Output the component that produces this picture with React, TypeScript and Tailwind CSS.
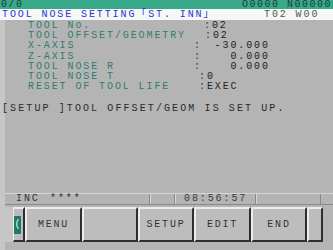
import React from "react";

const rows = [
  { label: "TOOL No.", colon: 176, value: "02" },
  { label: "TOOL OFFSET/GEOMETRY", colon: 177, value: "02" },
  { label: "X-AXIS", colon: 166, value: "-30.000", right: true },
  { label: "Z-AXIS", colon: 166, value: "0.000", right: true },
  { label: "TOOL NOSE R", colon: 166, value: "0.000", right: true },
  { label: "TOOL NOSE T", colon: 171, value: "0" },
  { label: "RESET OF TOOL LIFE", colon: 171, value: "EXEC" },
];

function SoftKey({ label, w }: { label?: string; w: string }) {
  return (
    <div
      className={`${w} h-full flex items-center justify-center bg-[#bdbdbd] border-t-2 border-l-2 border-t-[#ececec] border-l-[#ececec] border-b-2 border-r-2 border-b-[#2e2e2e] border-r-[#2e2e2e] text-[#333] tracking-[1.8px]`}
    >
      {label}
    </div>
  );
}

export default function App() {
  return (
    <div
      className="w-[333px] h-[250px] flex flex-col bg-[#c4c4c4] text-[10px] overflow-hidden"
      style={{ fontFamily: '"Liberation Mono", "Noto Sans CJK JP", monospace' }}
    >
      <div className="h-[9px] shrink-0 bg-[#3aa98a] flex items-center justify-between px-[1px] leading-[10px] text-[#163f33] tracking-[1.5px]">
        <span>0/0</span>
        <span>O0000 N00000</span>
      </div>
      <div className="h-[11px] shrink-0 bg-[#f6f8f6] flex items-center leading-[11px] tracking-[1.9px]">
        <span className="pl-[2px] text-[#2b2fd6] w-[264px]">TOOL NOSE SETTING「ST. INN」</span>
        <span className="text-[#555]">T02 W00</span>
      </div>
      <div className="h-[173px] shrink-0 flex bg-[#b4b4b4]">
        <div className="w-[5px] bg-[#c6c6c6]" />
        <div className="flex-1 flex flex-col pt-[1px] leading-[10.2px] tracking-[1.9px]">
          {rows.map((r, i) => (
            <div key={i} className="flex h-[10.2px]">
              <span className="pl-[23px] text-[#2f7d6e]" style={{ width: r.colon + 23 }}>
                {r.label}
              </span>
              <span className="text-[#3a3a3a]">:</span>
              {r.right ? (
                <span className="w-[68px] text-right text-[#222]">{r.value}</span>
              ) : (
                <span className="text-[#222]">{r.value}</span>
              )}
            </div>
          ))}
          <div className="h-[12px]" />
          <div className="flex h-[10.2px] -ml-[3px] text-[#2a2a2a] tracking-[2.1px]">[SETUP ]TOOL OFFSET/GEOM IS SET UP.</div>
        </div>
      </div>
      <div className="h-[12px] shrink-0 flex bg-[#b4b4b4] items-stretch">
        <div className="w-[5px] bg-[#c6c6c6]" />
        <div className="flex-1 flex border-t border-t-[#d6d6d6] border-b border-b-[#8a8a8a] text-[#333] leading-[10px]">
          <div className="w-[145px] flex items-center pl-[11px] border-r border-r-[#8a8a8a] tracking-[1.9px]">
            <span className="w-[34px]">INC</span>
            <span>****</span>
          </div>
          <div className="w-[25px] border-l border-l-[#d6d6d6] border-r border-r-[#8a8a8a]" />
          <div className="w-[81px] flex items-center pl-[8px] border-l border-l-[#d6d6d6] border-r border-r-[#8a8a8a] tracking-[1.9px] text-[#3a3a3a]">
            08:56:57
          </div>
          <div className="w-[65px] border-l border-l-[#d6d6d6] border-r border-r-[#8a8a8a]" />
        </div>
      </div>
      <div className="h-[2px] shrink-0 flex">
        <div className="w-[5px] bg-[#c6c6c6]" />
        <div className="flex-1 bg-[#b4b4b4]" />
      </div>
      <div className="h-[35px] shrink-0 flex bg-[#b4b4b4]">
        <div className="w-[13px] bg-[#c6c6c6]" />
        <div className="w-[12px] h-full flex items-center bg-[#bdbdbd] border-t-2 border-l border-t-[#ececec] border-l-[#ececec] border-b-2 border-r-2 border-b-[#2e2e2e] border-r-[#2e2e2e]">
          <div className="w-[7px] h-[18px] bg-[#1f7a6a] text-[#dff] leading-[18px] text-center">(</div>
        </div>
        <SoftKey label="MENU" w="w-[57px]" />
        <SoftKey w="w-[56px]" />
        <SoftKey label="SETUP" w="w-[56px]" />
        <SoftKey label="EDIT" w="w-[57px]" />
        <SoftKey label="END" w="w-[56px]" />
        <SoftKey w="w-[16px]" />
        <div className="flex-1" />
      </div>
      <div className="h-[8px] shrink-0 flex">
        <div className="w-[5px] bg-[#c6c6c6]" />
        <div className="flex-1 bg-[#b4b4b4]" />
      </div>
    </div>
  );
}
